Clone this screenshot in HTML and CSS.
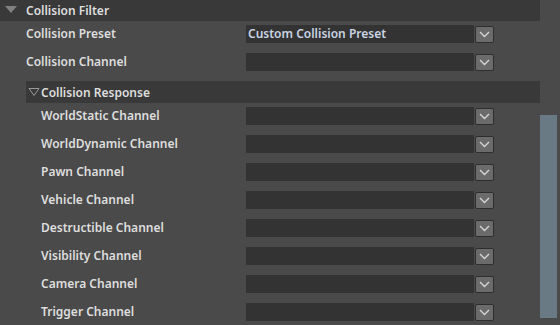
FILE: index.html
```html
<!DOCTYPE html>
<html lang="en">
<head>
    <meta charset="UTF-8">
    <title>Collision Filter</title>
    <link rel="stylesheet" href="styles.css">
</head>
<body>
    <div class="view">
        <div class="panel">
            <div class="section-head">
                <i class="tri-solid"></i>
                <span>Collision Filter</span>
            </div>
            <div class="row">
                <span class="label">Collision Preset</span>
                <div class="field">Custom Collision Preset</div>
                <button class="drop"><svg width="11" height="7" viewBox="0 0 11 7"><path d="M1 1 L5.5 5.5 L10 1" fill="none" stroke="#d8d8d8" stroke-width="1.3"/></svg></button>
            </div>
            <div class="row">
                <span class="label">Collision Channel</span>
                <div class="field"></div>
                <button class="drop"><svg width="11" height="7" viewBox="0 0 11 7"><path d="M1 1 L5.5 5.5 L10 1" fill="none" stroke="#d8d8d8" stroke-width="1.3"/></svg></button>
            </div>
            <div class="sub">
                <div class="sub-head">
                    <svg class="tri-line" width="12" height="10" viewBox="0 0 12 10"><path d="M1 1.5 H11 L6 8.5 Z" fill="none" stroke="#9a9a9a" stroke-width="1"/></svg>
                    <span>Collision Response</span>
                </div>
                <div id="channels"></div>
            </div>
        </div>
        <div class="scrollbar"><div class="thumb"></div></div>
    </div>

    <script>
        const channels = ['WorldStatic', 'WorldDynamic', 'Pawn', 'Vehicle', 'Destructible', 'Visibility', 'Camera', 'Trigger'];
        const list = document.getElementById('channels');

        channels.forEach(function (name) {
            const row = document.createElement('div');
            row.className = 'row nested';
            row.innerHTML = `
                <span class="label">${name} Channel</span>
                <div class="field"></div>
                <button class="drop"><svg width="11" height="7" viewBox="0 0 11 7"><path d="M1 1 L5.5 5.5 L10 1" fill="none" stroke="#d8d8d8" stroke-width="1.3"/></svg></button>
            `;
            list.appendChild(row);
        });
    </script>
</body>
</html>
```

FILE: styles.css
```css
* {
    box-sizing: border-box;
    margin: 0;
    padding: 0;
}

body {
    font-family: "Noto Sans", "Open Sans", sans-serif;
    font-size: 12px;
    font-weight: 600;
    color: #dedede;
    background: #4a4a4a;
    overflow: hidden;
    height: 100vh;
}

.view {
    display: flex;
    height: 325px;
}

.panel {
    width: 540px;
}

.section-head {
    display: flex;
    align-items: center;
    height: 21px;
    background: #393939;
    padding-left: 5px;
}

.tri-solid {
    width: 0;
    height: 0;
    border-left: 6px solid transparent;
    border-right: 6px solid transparent;
    border-top: 7px solid #808080;
    margin-right: 9px;
    margin-top: -2px;
}

.row {
    display: flex;
    align-items: flex-start;
    height: 28px;
    padding-top: 4px;
    padding-left: 26px;
}

.row.nested {
    padding-left: 41px;
}

.label {
    flex: 1;
    max-width: 220px;
    line-height: 18px;
}

.row.nested .label {
    max-width: 205px;
}

.field {
    width: 228px;
    height: 18px;
    background: #333333;
    color: #c9d3e3;
    line-height: 18px;
    padding-left: 2px;
}

.drop {
    width: 19px;
    height: 17px;
    margin-top: 1px;
    margin-left: 1px;
    background: #6b6b6b;
    border: 1px solid #2e2e2e;
    border-radius: 2px;
    display: flex;
    align-items: center;
    justify-content: center;
}

.sub {
    margin-top: 4px;
}

.sub-head {
    display: flex;
    align-items: center;
    height: 22px;
    margin-left: 26px;
    background: #393939;
    padding-left: 2px;
}

.tri-line {
    margin-right: 1px;
}

.scrollbar {
    width: 20px;
    padding: 115px 3px 7px 0;
}

.thumb {
    height: 203px;
    background: #6a7a85;
}
```
